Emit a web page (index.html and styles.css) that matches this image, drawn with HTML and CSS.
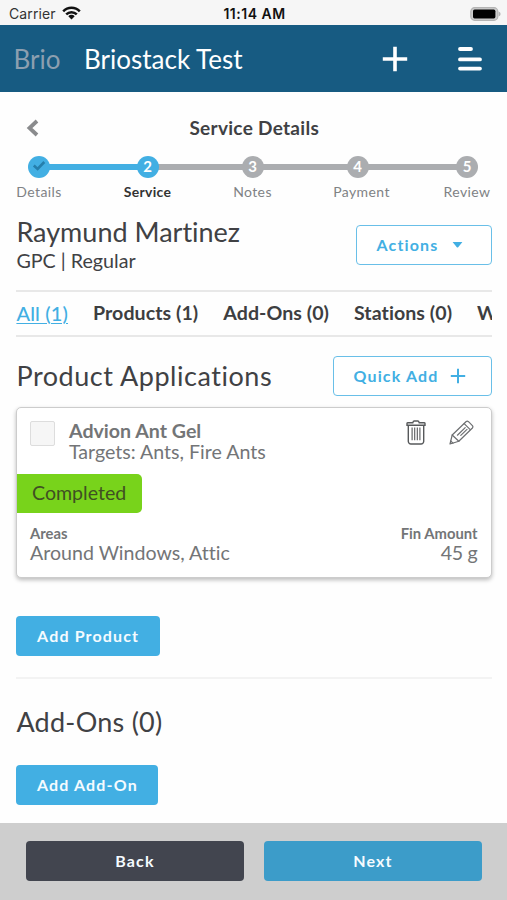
FILE: index.html
```html
<!DOCTYPE html>
<html lang="en">
<head>
<meta charset="utf-8">
<title>Service Details</title>
<link rel="stylesheet" href="styles.css">
</head>
<body>
<div class="status-bar">
  <div class="carrier"><span>Carrier</span>
    <svg width="19" height="14" viewBox="0 0 19 14"><g fill="none" stroke="#111" stroke-width="2.5"><path d="M1.2 5.3A11.6 11.6 0 0 1 17.8 5.3"/><path d="M4.2 8.4A7.4 7.4 0 0 1 14.8 8.4"/></g><path d="M9.5 13.4 6.3 10.2A4.5 4.5 0 0 1 12.7 10.2Z" fill="#111"/></svg>
  </div>
  <span class="clock">11:14 AM</span>
  <svg class="battery" width="31" height="14" viewBox="0 0 31 14"><rect x=".8" y=".7" width="27" height="12.6" rx="3.8" fill="#ccc" stroke="#b4b4b4" stroke-width="1.2"/><rect x="3" y="2.6" width="22.4" height="8.8" rx="1.6" fill="#000"/><path d="M28.6 4.6Q30.6 5.4 30.6 7T28.6 9.4Z" fill="#b4b4b4"/></svg>
</div>
<header class="app-bar">
  <span class="brand">Brio</span>
  <span class="company">Briostack Test</span>
  <svg class="add" width="26" height="26" viewBox="0 0 26 26"><path d="M13 .8V25.2M.8 13H25.2" stroke="#fff" stroke-width="3.6"/></svg>
  <svg width="24" height="26" viewBox="0 0 24 26"><path d="M2 3H13M2 13.4H22M2 22.6H22" stroke="#fff" stroke-width="3.8" stroke-linecap="round"/></svg>
</header>
<main>
  <div class="title-row">
    <svg width="14" height="18" viewBox="0 0 14 18"><path d="M11 2 3.5 9 11 16" fill="none" stroke="#8a8b8d" stroke-width="3.8"/></svg>
    <h1>Service Details</h1>
  </div>
  <ol class="stepper">
    <li class="step done"><span class="dot"><svg width="14" height="12" viewBox="0 0 14 12"><path d="M1.8 5.5 5.6 9 12.3 2" fill="none" stroke="#257fac" stroke-width="2.6"/></svg></span><span class="label">Details</span></li>
    <li class="step current"><span class="dot">2</span><span class="label">Service</span></li>
    <li class="step"><span class="dot">3</span><span class="label">Notes</span></li>
    <li class="step"><span class="dot">4</span><span class="label payment">Payment</span></li>
    <li class="step"><span class="dot">5</span><span class="label">Review</span></li>
  </ol>
  <section class="customer">
    <div><h2 class="name">Raymund Martinez</h2><p class="plan">GPC | Regular</p></div>
    <button class="btn outline actions">Actions<svg width="11" height="8" viewBox="0 0 11 8"><path d="M.6 1H10.4L6.2 6.2Q5.5 7 4.8 6.2Z" fill="#42afe3"/></svg></button>
  </section>
  <nav class="tabs"><a class="active">All (1)</a><a>Products (1)</a><a>Add-Ons (0)</a><a>Stations (0)</a><a>W</a></nav>
  <div class="section-head">
    <h2>Product Applications</h2>
    <button class="btn outline quick">Quick Add<svg width="16" height="16" viewBox="0 0 16 16"><path d="M8 .8V15.2M.8 8H15.2" stroke="#42afe3" stroke-width="2"/></svg></button>
  </div>
  <article class="card">
    <div class="card-top">
      <span class="checkbox"></span>
      <div class="product"><h3>Advion Ant Gel</h3><p>Targets: Ants, Fire Ants</p></div>
      <svg class="trash" width="20" height="25" viewBox="0 0 20 25"><g fill="none" stroke="#57595b" stroke-width="1.4"><path d="M1 5.2V3.4Q1 2.8 2 2.8H6.8Q7.2 1 8.2 1H11.8Q12.8 1 13.2 2.8H18Q19 2.8 19 3.4V5.2Z"/><path d="M2.3 5.5V21.5Q2.6 24 5 24H15Q17.4 24 17.7 21.5V5.5"/><path d="M6.1 7.6V20.2M8.7 7.6V20.2M11.3 7.6V20.2M13.9 7.6V20.2" stroke-width="1.1"/></g></svg>
      <svg width="25" height="25" viewBox="0 0 25 25"><g fill="none" stroke="#6d6f71" stroke-width="1.2" stroke-linejoin="round" stroke-linecap="round"><path d="M1 24 3.2 15 17.2 1.5Q18.3.6 19.5 1.7L23.4 5.6Q24.4 6.8 23.4 8L9.8 21.3Z"/><path d="M3.2 15 9.8 21.3M1.7 21 4 23.1M15.2 3.6 21.2 9.6M8.4 15.2 16.2 7.6M11.8 15.4 18 9.4"/></g></svg>
    </div>
    <span class="badge">Completed</span>
    <div class="facts"><div><h4>Areas</h4><p>Around Windows, Attic</p></div><div class="amount"><h4>Fin Amount</h4><p>45 g</p></div></div>
  </article>
  <button class="btn solid add-product">Add Product</button>
  <section class="addon-section">
    <h2>Add-Ons (0)</h2>
    <button class="btn solid add-addon">Add Add-On</button>
  </section>
</main>
<footer><button class="btn back">Back</button><button class="btn next">Next</button></footer>
</body>
</html>
```
FILE: styles.css
```css
* { box-sizing: border-box; }
body { margin: 0; width: 507px; height: 900px; overflow: hidden; display: flex; flex-direction: column; background: #fefefe; color: #404144; font-family: Lato, sans-serif; font-variant-ligatures: none; }
h1, h2, h3, h4, p, ol { margin: 0; padding: 0; font-weight: 400; }
svg { display: block; flex: none; }
.status-bar { height: 25px; flex: none; background: #f6f6f6; color: #111; display: grid; grid-template-columns: 1fr auto 1fr; align-items: center; padding: 2px 6px 0 9px; font: 14px/20px Inter, sans-serif; }
.carrier { display: flex; align-items: center; gap: 6px; color: #333; letter-spacing: .1px; }
.carrier svg { margin-top: -2px; }
.clock { font-weight: 600; font-size: 14px; letter-spacing: .5px; margin-left: -1px; }
.battery { justify-self: end; }
.app-bar { height: 67px; flex: none; background: #175b82; display: flex; align-items: center; padding: 0 25px 0 13.5px; font-size: 26px; color: #fff; }
.brand { width: 70.5px; color: #8c9fb0; }
.company { flex: 1; }
.add { margin-right: 50px; }
main { flex: 1; padding: 0 15.5px 0 16.4px; }
.title-row { height: 62px; padding: 9px 0 0 9.6px; display: flex; align-items: center; }
h1 { flex: 1; margin-right: 23px; text-align: center; font-size: 19px; font-weight: 700; line-height: 24px; letter-spacing: .3px; }
.stepper { display: grid; grid-template-columns: 78px 139px 71px 139px 80px; margin: 0 -15.5px 0 -16.4px; list-style: none; height: 57px; }
.step { display: flex; flex-direction: column; align-items: center; position: relative; color: #808285; }
.step + .step::before { content: ""; position: absolute; height: 6px; top: 10px; right: 50%; width: 107px; background: #abadb0; }
.step.current::before { background: #42afe3; }
.dot { position: relative; z-index: 1; margin-top: 2px; width: 22px; height: 22px; border-radius: 50%; background: #abadb0; color: #fff; font-size: 15px; font-weight: 700; line-height: 20px; display: flex; justify-content: center; }
.done .dot { align-items: center; padding-bottom: 2px; }
.done .dot, .current .dot { background: #42afe3; }
.label { margin-top: 4px; font-size: 14px; line-height: 20px; letter-spacing: .4px; }
.payment { margin-left: 8px; }
.current .label { color: #333; font-weight: 700; letter-spacing: .3px; }
.customer { height: 79px; display: flex; justify-content: space-between; }
.name { margin-top: 4px; font-size: 27px; line-height: 33px; letter-spacing: 0; }
.plan { margin-top: 1px; font-size: 19.7px; line-height: 24px; }
.btn { border: 0; border-radius: 4px; font: 700 16px/20px Lato, sans-serif; letter-spacing: 1.15px; height: 40px; padding: 0; color: #f5fbff; display: flex; align-items: center; justify-content: center; }
.outline { border: 1px solid #69bfe8; background: #fff; color: #42afe3; justify-content: flex-start; padding-left: 20px; }
.actions { width: 136px; margin-top: 14px; }
.actions svg { margin-left: 14px; }
.quick { width: 159px; }
.quick svg { margin-left: 12px; }
.tabs { height: 47px; border: solid #e8e8e8; border-width: 2px 0; padding-bottom: 2px; display: flex; gap: 25px; align-items: center; overflow: hidden; white-space: nowrap; font-size: 19.6px; letter-spacing: .05px; font-weight: 700; color: #3d3e41; }
.tabs a { flex: none; }
.tabs .active { color: #42afe3; font-weight: 500; font-size: 20px; letter-spacing: .15px; text-decoration: underline; text-decoration-thickness: 1px; text-underline-offset: 2px; }
.section-head { display: flex; align-items: center; justify-content: space-between; height: 40px; margin: 19px 0 11px; }
h2 { font-size: 27px; line-height: 34px; letter-spacing: .4px; }
.section-head h2 { letter-spacing: .54px; }
.card { height: 171px; border: 1px solid #ccc; border-radius: 5px; box-shadow: 0 2px 4px #bbb; background: #fff; color: #737577; }
.card-top { height: 66px; display: flex; align-items: flex-start; padding: 12px 17px 0 12.6px; }
.checkbox { width: 25px; height: 25px; margin-top: 1px; border: 1px solid #ddd; border-radius: 2px; background: #f6f6f6; }
.product { flex: 1; margin-left: 14px; font-size: 19.6px; line-height: 21px; }
.product h3 { font-size: 19.6px; font-weight: 700; line-height: 21px; }
.trash { margin-right: 22.5px; }
.badge { display: flex; align-items: center; width: 124.6px; height: 39px; padding: 0 0 2px 14.6px; border-radius: 0 5px 5px 0; background: #78d31b; color: #405023; font-size: 19.6px; }
.facts { display: flex; justify-content: space-between; padding: 11px 13px 0 12.6px; font-size: 19.6px; line-height: 22px; }
h4 { font-size: 14.8px; line-height: 18px; font-weight: 700; }
.amount { text-align: right; }
.amount p { letter-spacing: -.3px; }
.solid { background: #42afe3; }
.add-product { width: 143.5px; margin-top: 38px; }
.addon-section { margin-top: 21px; padding-top: 26px; border-top: 2px solid #f3f3f3; }
.addon-section h2 { letter-spacing: .25px; }
.add-addon { width: 142px; margin-top: 26px; }
footer { height: 77px; flex: none; background: #cecece; padding: 18px 25px 0 26px; display: grid; grid-template-columns: 1fr 1fr; gap: 20px; }
.back { background: #42454f; }
.next { background: #3c9cc9; }
```
